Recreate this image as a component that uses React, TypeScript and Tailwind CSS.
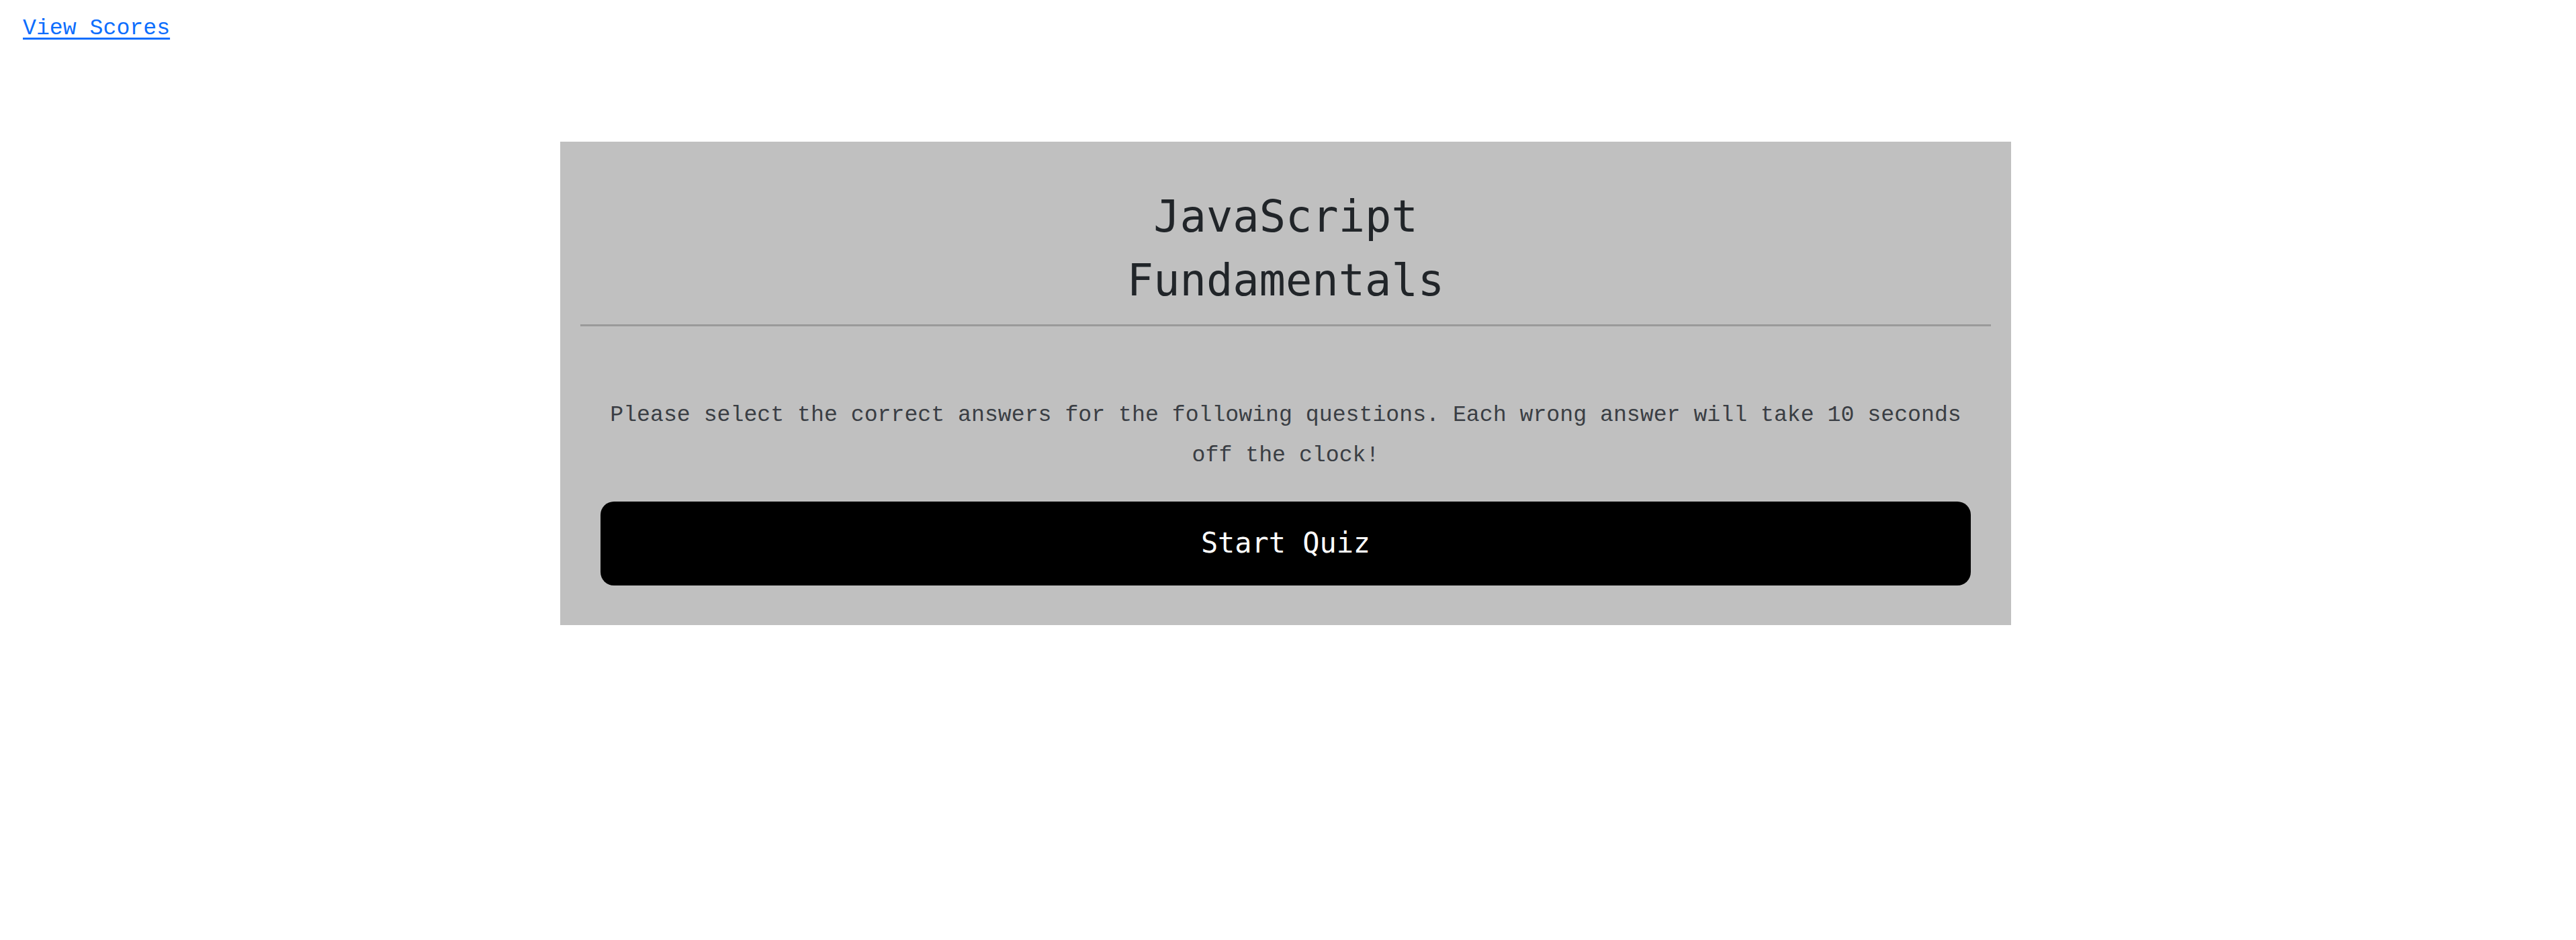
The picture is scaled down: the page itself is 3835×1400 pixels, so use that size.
export default function App() {
    return (
        <div className="min-h-screen bg-white" style={{ fontFamily: '"DejaVu Sans Mono", monospace' }}>
            <div className="h-[66px] pt-[18px] pl-[34px] leading-[48px]">
                <a href="#" className="text-[33.2px] text-[#0d6efd] underline decoration-[3px] underline-offset-[5px]" style={{ fontFamily: '"Liberation Mono", monospace' }}>
                    View Scores
                </a>
            </div>
            <div className="pr-[7px]">
                <section className="mx-auto mt-[145px] w-[2160px] bg-[#c0c0c0] pt-[64px] pb-[59px]">
                    <h1 className="text-center text-[65.4px] leading-[95px] font-normal text-[#212529]">
                        JavaScript
                        <br />
                        Fundamentals
                    </h1>
                    <hr className="mx-[30px] mt-[18px] border-0 border-t-[3px] border-[#9a9a9a]" />
                    <p className="mx-[60px] mt-[102px] text-center text-[33.2px] leading-[60px] text-[#3a3e44]" style={{ fontFamily: '"Liberation Mono", monospace' }}>
                        Please select the correct answers for the following questions. Each wrong answer will take 10 seconds off the clock!
                    </p>
                    <div className="mx-[60px] mt-[39px]">
                        <button className="flex h-[125px] w-full items-center justify-center rounded-[20px] bg-black text-[41.9px] text-white">
                            Start Quiz
                        </button>
                    </div>
                </section>
            </div>
        </div>
    );
}
